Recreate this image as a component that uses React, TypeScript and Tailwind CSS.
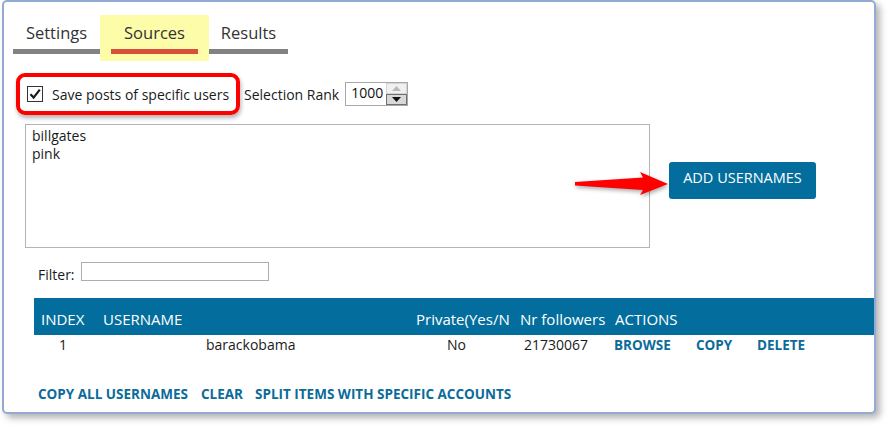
import React from "react";

const font = { fontFamily: '"Open Sans", "Noto Sans", sans-serif' };

function CheckBox() {
  return (
    <div className="w-[16px] h-[16px] border border-[#333333] bg-white flex items-center justify-center">
      <svg width="14" height="14" viewBox="0 0 14 14">
        <path d="M2.5 7.2 L5.6 10.6 L11.8 2.6" fill="none" stroke="#1a1a1a" strokeWidth="2.2" />
      </svg>
    </div>
  );
}

function Spinner() {
  return (
    <div className="ml-[6px] flex items-stretch w-[63px] h-[24px] border border-[#a8a8a8] bg-white">
      <div className="flex-1 pl-[5px] text-[14px] leading-[20px] text-[#111]">1000</div>
      <div className="w-[21px] flex flex-col">
        <div className="flex-1 bg-[#f0f0f0] border border-[#d4d4d4] flex items-center justify-center">
          <svg width="9" height="5" viewBox="0 0 9 5"><path d="M0 5 L4.5 0 L9 5 Z" fill="#b8b8b8" /></svg>
        </div>
        <div className="flex-1 bg-[#d8d8d8] border border-[#707070] flex items-center justify-center">
          <svg width="9" height="5" viewBox="0 0 9 5"><path d="M0 0 L9 0 L4.5 5 Z" fill="#111" /></svg>
        </div>
      </div>
    </div>
  );
}

export default function App() {
  return (
    <div className="w-[892px] h-[430px] bg-white text-[#1a1a1a]" style={font}>
      <div className="ml-[2px] w-[874px] h-[414px] border-2 border-[#93abd4] rounded-[5px] bg-white shadow-[4px_4px_7px_rgba(0,0,0,0.3)] relative overflow-hidden">
        {/* Tabs */}
        <div className="ml-[9px] mt-[13px] flex items-start">
          <div className="w-[87px] pt-[5px] flex flex-col items-center">
            <div className="text-[16.5px] leading-[26px] text-[#333]">Settings</div>
            <div className="mt-[3px] w-full h-[5px] bg-[#828282]" />
          </div>
          <div className="w-[109px] h-[46px] bg-[#fdfca8] pt-[5px] px-[11px] flex flex-col items-center">
            <div className="text-[16.5px] leading-[26px] text-[#333]">Sources</div>
            <div className="mt-[3px] w-full h-[5px] bg-[#d9503a]" />
          </div>
          <div className="w-[79px] pt-[5px] flex flex-col items-center">
            <div className="text-[16.5px] leading-[26px] text-[#333]">Results</div>
            <div className="mt-[3px] w-full h-[5px] bg-[#828282]" />
          </div>
        </div>

        {/* Checkbox row */}
        <div className="mt-[12px] ml-[12px] flex items-center">
          <div className="w-[224px] h-[42px] border-[4px] border-[#ff0000] rounded-[9px] shadow-[1px_3px_4px_rgba(0,0,0,0.3)] flex items-center pl-[7px]">
            <CheckBox />
            <span className="ml-[9px] text-[14px] leading-[20px] pt-[2px] whitespace-nowrap">Save posts of specific users</span>
          </div>
          <span className="ml-[4px] text-[14px] leading-[20px] pt-[2px] whitespace-nowrap">Selection Rank</span>
          <Spinner />
        </div>

        {/* Textarea + button */}
        <div className="mt-[9px] ml-[21px] flex items-start relative">
          <div className="w-[625px] h-[124px] border border-[#b4b4b4] px-[6px] pt-[2px] text-[14px] leading-[18px]">
            <div>billgates</div>
            <div>pink</div>
          </div>
          <button className="ml-[19px] mt-[38px] w-[147px] h-[37px] bg-[#036e9d] rounded-[3px] text-white text-[14.5px] leading-[20px] pb-[6px]">
            ADD USERNAMES
          </button>
          <svg
            className="absolute left-[546px] top-[46px]"
            width="100"
            height="30"
            viewBox="571 170 100 30"
            style={{ filter: "drop-shadow(1px 2px 2px rgba(0,0,0,0.35))" }}
          >
            <path d="M575 182 L643 177.5 L640 172 L668 184 L640 195 L643 190 L575 185.5 Z" fill="#ff0000" />
          </svg>
        </div>

        {/* Filter */}
        <div className="mt-[14px] ml-[34px] flex items-end">
          <span className="text-[14px] leading-[19px] translate-y-[3px]">Filter:</span>
          <div className="ml-[6px] w-[188px] h-[19px] border border-[#adadad]" />
        </div>

        {/* Table */}
        <div className="mt-[17px] ml-[30px]">
          <div className="h-[37px] bg-[#036e9d] text-white text-[15px] flex items-center pt-[5px]">
            <div className="w-[63px] pl-[7px]">INDEX</div>
            <div className="w-[313px] pl-[6px]">USERNAME</div>
            <div className="w-[106px] pl-[6px] whitespace-nowrap overflow-hidden">Private(Yes/N</div>
            <div className="w-[94px] pl-[4px] whitespace-nowrap">Nr followers</div>
            <div className="pl-[5px]">ACTIONS</div>
          </div>
          <div className="h-[20px] flex items-center text-[14px] leading-[20px]">
            <div className="w-[63px] pl-[25px]">1</div>
            <div className="w-[313px] pl-[109px]">barackobama</div>
            <div className="w-[106px] pl-[37px]">No</div>
            <div className="w-[94px] pl-[8px]">21730067</div>
            <div className="pl-[4px] flex font-bold text-[13.5px] text-[#0b6b99]">
              <span className="w-[82px]">BROWSE</span>
              <span className="w-[61px]">COPY</span>
              <span>DELETE</span>
            </div>
          </div>
        </div>

        {/* Bottom links */}
        <div className="mt-[30px] ml-[34px] flex font-bold text-[13.5px] leading-[18px] text-[#0b6b99]">
          <span>COPY ALL USERNAMES</span>
          <span className="ml-[13px]">CLEAR</span>
          <span className="ml-[12px]">SPLIT ITEMS WITH SPECIFIC ACCOUNTS</span>
        </div>
      </div>
    </div>
  );
}
